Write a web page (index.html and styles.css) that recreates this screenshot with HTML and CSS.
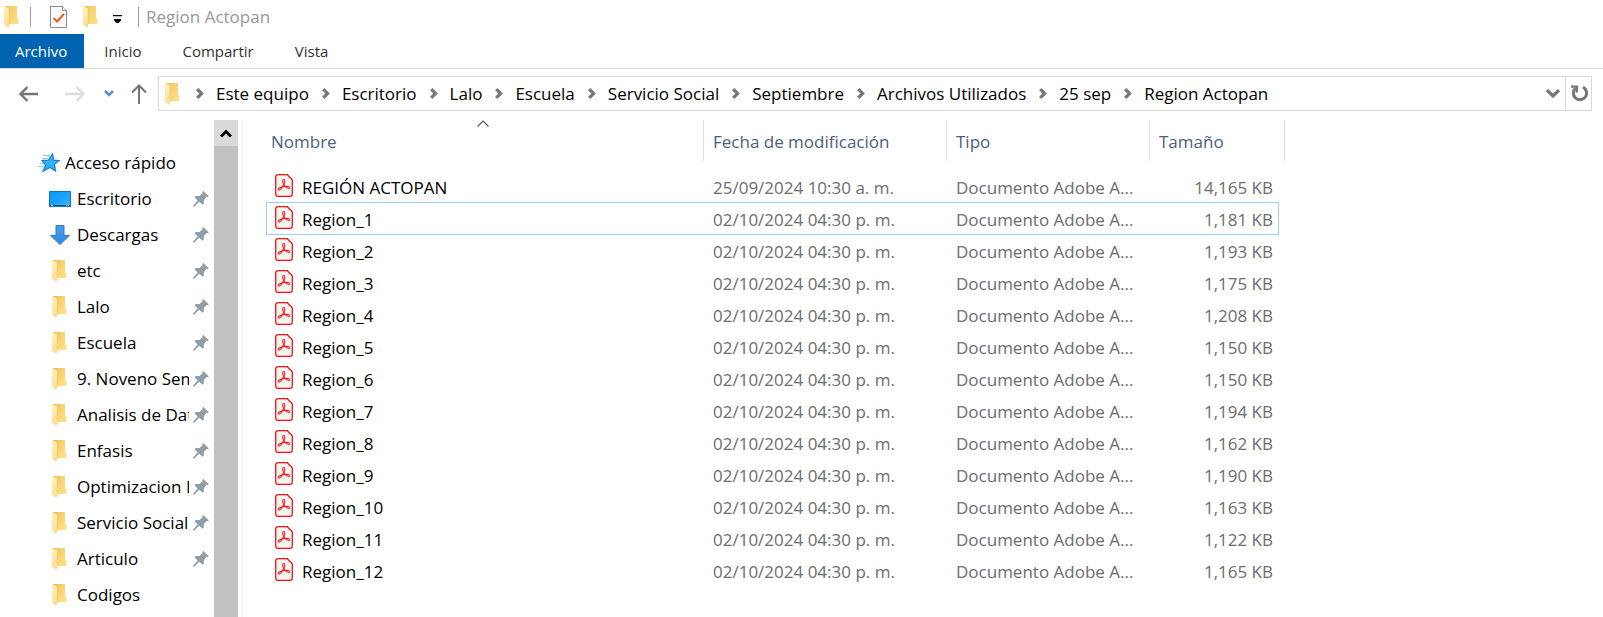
FILE: index.html
```
<!DOCTYPE html>
<html lang="es">
<head>
<meta charset="utf-8">
<title>Region Actopan</title>
<link rel="stylesheet" href="styles.css">
</head>
<body>
<svg class="sprite" aria-hidden="true">
  <defs>
    <linearGradient id="g-back" x1="0" y1="0" x2="1" y2="1"><stop offset="0" stop-color="#eec662"/><stop offset="1" stop-color="#ffe28a"/></linearGradient>
    <linearGradient id="g-flap" x1="0" y1="0" x2="0" y2="1"><stop offset="0" stop-color="#fff0bd"/><stop offset="1" stop-color="#fddf90"/></linearGradient>
    <linearGradient id="g-screen" x1="0" y1="0" x2="1" y2="1"><stop offset="0" stop-color="#0f9bfb"/><stop offset=".5" stop-color="#18a0fb"/><stop offset="1" stop-color="#46b4ff"/></linearGradient>
    <linearGradient id="g-down" x1="0" y1="0" x2="0" y2="1"><stop offset="0" stop-color="#4a9fea"/><stop offset="1" stop-color="#2a8ae0"/></linearGradient>
  </defs>
  <symbol id="folder" viewBox="0 0 15 22">
    <path d="M1 0H13V12L14.500 13V18H3Z" fill="url(#g-back)"/>
    <path d="M0 0L5 3V18.500L4 22L0 18.500Z" fill="url(#g-flap)"/>
    <path d="M5 3V18.500L4 21" fill="none" stroke="#ecc66a" stroke-width=".6"/>
  </symbol>
  <symbol id="sep" viewBox="0 0 8 11"><path d="M1.200 1.200L5.600 5.500L1.200 9.800" fill="none" stroke="#777" stroke-width="3.200"/></symbol>
  <symbol id="pin" viewBox="0 0 16 16">
    <path d="M10.300 0L15.800 5.200L14.600 6.200L13.400 6L10.800 9.200L10.800 12.800L9.600 13.800L6.300 10.800L1 15.800L0 15.700L.1 14.700L4.700 9.300L1.400 6.200L2.600 5L6.400 5L9.700 2.300L9.300 1Z" fill="#919ca5"/>
  </symbol>
  <symbol id="pdf" viewBox="0 0 18 23">
    <path d="M3 .7H12.300L17.300 5.700V20Q17.300 22.300 15 22.300H3Q.7 22.300 .7 20V3Q.7 .7 3 .7Z" fill="#f4f4f4" stroke="#f6120a" stroke-width="1.300"/>
    <g fill="none" stroke="#f02018" stroke-width="1.100">
      <path d="M8.700 10.200C7.200 8 7.200 5.500 8.700 5.500C10.200 5.500 10 7.900 8.900 10.200"/>
      <path d="M8.900 10.200C8.300 11.600 7.500 12.900 6.600 14C5.100 16.300 3.400 16.500 3.500 15.200C3.700 14 5.400 13.400 7 13"/>
      <path d="M8.700 10.200C9.400 11.400 10.300 12.300 11.400 13.200C13.200 15 14.900 14.700 14.700 13.500C14.400 12.200 12.500 12.200 10.800 12.300C9.400 12.400 8.100 12.700 7 13"/>
    </g>
  </symbol>
</svg>

<header class="titlebar">
  <svg class="folder"><use href="#folder"/></svg>
  <span class="rule"></span>
  <button class="plain quick-doc" aria-label="Propiedades"><svg width="18" height="22" viewBox="0 0 18 22"><path d="M.5 .5H12.500L16.500 4.500V21.500H.5Z" fill="#f8f9fb" stroke="#8a8a8a"/><path d="M12.500 .5V4.500H16.500" fill="#fff" stroke="#8a8a8a"/><path d="M3.500 12L7 15.500L14 8" fill="none" stroke="#f05a1c" stroke-width="2"/></svg></button>
  <button class="plain quick-folder" aria-label="Nueva carpeta"><svg class="folder"><use href="#folder"/></svg></button>
  <button class="plain quick-more" aria-label="Personalizar"><svg width="9" height="9" viewBox="0 0 9 9"><path d="M0 0H9V1.300H0ZM1 4H8V5.500L5.500 8H3.500L1 5.500Z" fill="#000"/></svg></button>
  <span class="rule"></span>
  <h1 class="title">Region Actopan</h1>
</header>

<nav class="tabs" aria-label="Cinta">
  <button class="tab file">Archivo</button>
  <button class="tab">Inicio</button>
  <button class="tab share">Compartir</button>
  <button class="tab">Vista</button>
</nav>

<div class="navbar">
  <div class="history">
    <button class="plain" aria-label="Atrás"><svg width="20" height="16" viewBox="0 0 20 16"><path d="M8.500 1L1.500 8L8.500 15M1.500 8H19" fill="none" stroke="#747474" stroke-width="2.400"/></svg></button>
    <button class="plain forward" aria-label="Adelante"><svg width="20" height="16" viewBox="0 0 20 16"><path d="M11.500 1L18.500 8L11.500 15M18.500 8H0" fill="none" stroke="#dcdcdc" stroke-width="2.400"/></svg></button>
    <button class="plain recent" aria-label="Ubicaciones recientes"><svg width="10" height="7" viewBox="0 0 10 7"><path d="M1 1L5 5L9 1" fill="none" stroke="#5f92c8" stroke-width="2.600"/></svg></button>
    <button class="plain up" aria-label="Subir"><svg width="16" height="20" viewBox="0 0 16 20"><path d="M1 8.500L8 1.500L15 8.500M8 1.500V20" fill="none" stroke="#747474" stroke-width="2"/></svg></button>
  </div>
  <div class="address">
    <svg class="folder"><use href="#folder"/></svg>
    <div class="crumbs">
      <svg class="sep"><use href="#sep"/></svg><a href="#">Este equipo</a>
      <svg class="sep"><use href="#sep"/></svg><a href="#">Escritorio</a>
      <svg class="sep"><use href="#sep"/></svg><a href="#">Lalo</a>
      <svg class="sep"><use href="#sep"/></svg><a href="#">Escuela</a>
      <svg class="sep"><use href="#sep"/></svg><a href="#">Servicio Social</a>
      <svg class="sep"><use href="#sep"/></svg><a href="#">Septiembre</a>
      <svg class="sep"><use href="#sep"/></svg><a href="#">Archivos Utilizados</a>
      <svg class="sep"><use href="#sep"/></svg><a href="#">25 sep</a>
      <svg class="sep"><use href="#sep"/></svg><a href="#">Region Actopan</a>
    </div>
    <button class="plain drop" aria-label="Ubicaciones anteriores"><svg width="14" height="9" viewBox="0 0 14 9"><path d="M1 1.200L7 7L13 1.200" fill="none" stroke="#777" stroke-width="3.200"/></svg></button>
    <button class="plain refresh" aria-label="Actualizar"><svg width="17" height="17" viewBox="0 0 17 17"><path d="M12 2.200A6.600 6.600 0 1 1 4.500 3.200" fill="none" stroke="#777" stroke-width="3"/><path d="M0 .5H7V7.500H4.700V2.800H0Z" fill="#777"/></svg></button>
  </div>
</div>

<main class="body">
  <aside class="side">
    <ul class="tree">
      <li class="root"><svg width="22" height="20" viewBox="0 0 22 20"><path d="M14.500 1L15.800 7.200L21.200 7.600L16.400 11.400L17.600 18L12 14.500L5 18.200L7.600 12L4 7.600L10.400 7.200Z" fill="#35b0f5" stroke="#1483cc" stroke-width="1.200"/><path d="M5 2.500H12M4 5.500H10M0 13.500H6M2 10.500H5" stroke="#8cc9f2" stroke-width="1.200"/></svg><a href="#">Acceso rápido</a></li>
      <li><svg class="pic" width="22" height="16" viewBox="0 0 22 16"><path d="M.5 .5H21.500V15.500H.5Z" fill="url(#g-screen)" stroke="#0b73b8"/><path d="M1 14.500H21" stroke="#08548c"/><path d="M2 14.500H4M17 14.500H18M19 14.500H20" stroke="#fff"/></svg><a href="#">Escritorio</a><svg class="pin"><use href="#pin"/></svg></li>
      <li><svg class="pic" width="22" height="20" viewBox="0 0 22 20"><path d="M7 .5H15V10.500H20.300L11 19.500L1.700 10.500H7Z" fill="url(#g-down)" stroke="#2b7fca"/></svg><a href="#">Descargas</a><svg class="pin"><use href="#pin"/></svg></li>
      <li><svg class="folder"><use href="#folder"/></svg><a href="#">etc</a><svg class="pin"><use href="#pin"/></svg></li>
      <li><svg class="folder"><use href="#folder"/></svg><a href="#">Lalo</a><svg class="pin"><use href="#pin"/></svg></li>
      <li><svg class="folder"><use href="#folder"/></svg><a href="#">Escuela</a><svg class="pin"><use href="#pin"/></svg></li>
      <li><svg class="folder"><use href="#folder"/></svg><a href="#">9. Noveno Semestre</a><svg class="pin"><use href="#pin"/></svg></li>
      <li><svg class="folder"><use href="#folder"/></svg><a href="#">Analisis de Datos</a><svg class="pin"><use href="#pin"/></svg></li>
      <li><svg class="folder"><use href="#folder"/></svg><a href="#">Enfasis</a><svg class="pin"><use href="#pin"/></svg></li>
      <li><svg class="folder"><use href="#folder"/></svg><a href="#">Optimizacion D</a><svg class="pin"><use href="#pin"/></svg></li>
      <li><svg class="folder"><use href="#folder"/></svg><a href="#">Servicio Social</a><svg class="pin"><use href="#pin"/></svg></li>
      <li><svg class="folder"><use href="#folder"/></svg><a href="#">Articulo</a><svg class="pin"><use href="#pin"/></svg></li>
      <li><svg class="folder"><use href="#folder"/></svg><a href="#">Codigos</a></li>
    </ul>
    <div class="scroll"><button class="plain scroll-up" aria-label="Desplazar hacia arriba"><svg width="12" height="10" viewBox="0 0 12 10"><path d="M1 8.500L6 3.500L11 8.500" fill="none" stroke="#000" stroke-width="3"/></svg></button></div>
  </aside>

  <section class="files">
    <table class="list">
      <colgroup><col class="c-name"><col class="c-date"><col class="c-type"><col class="c-size"></colgroup>
      <thead>
        <tr><th scope="col">Nombre<svg class="sort" width="12" height="7" viewBox="0 0 12 7"><path d="M.5 6.500L6 1L11.500 6.500" fill="none" stroke="#555" stroke-width="1.200"/></svg></th><th scope="col">Fecha de modificación</th><th scope="col">Tipo</th><th scope="col">Tamaño</th></tr>
      </thead>
      <tbody>
        <tr><td><svg class="pdf"><use href="#pdf"/></svg>REGIÓN ACTOPAN</td><td>25/09/2024 10:30 a. m.</td><td>Documento Adobe A...</td><td>14,165 KB</td></tr>
        <tr class="focused"><td><svg class="pdf"><use href="#pdf"/></svg>Region_1</td><td>02/10/2024 04:30 p. m.</td><td>Documento Adobe A...</td><td>1,181 KB</td></tr>
        <tr><td><svg class="pdf"><use href="#pdf"/></svg>Region_2</td><td>02/10/2024 04:30 p. m.</td><td>Documento Adobe A...</td><td>1,193 KB</td></tr>
        <tr><td><svg class="pdf"><use href="#pdf"/></svg>Region_3</td><td>02/10/2024 04:30 p. m.</td><td>Documento Adobe A...</td><td>1,175 KB</td></tr>
        <tr><td><svg class="pdf"><use href="#pdf"/></svg>Region_4</td><td>02/10/2024 04:30 p. m.</td><td>Documento Adobe A...</td><td>1,208 KB</td></tr>
        <tr><td><svg class="pdf"><use href="#pdf"/></svg>Region_5</td><td>02/10/2024 04:30 p. m.</td><td>Documento Adobe A...</td><td>1,150 KB</td></tr>
        <tr><td><svg class="pdf"><use href="#pdf"/></svg>Region_6</td><td>02/10/2024 04:30 p. m.</td><td>Documento Adobe A...</td><td>1,150 KB</td></tr>
        <tr><td><svg class="pdf"><use href="#pdf"/></svg>Region_7</td><td>02/10/2024 04:30 p. m.</td><td>Documento Adobe A...</td><td>1,194 KB</td></tr>
        <tr><td><svg class="pdf"><use href="#pdf"/></svg>Region_8</td><td>02/10/2024 04:30 p. m.</td><td>Documento Adobe A...</td><td>1,162 KB</td></tr>
        <tr><td><svg class="pdf"><use href="#pdf"/></svg>Region_9</td><td>02/10/2024 04:30 p. m.</td><td>Documento Adobe A...</td><td>1,190 KB</td></tr>
        <tr><td><svg class="pdf"><use href="#pdf"/></svg>Region_10</td><td>02/10/2024 04:30 p. m.</td><td>Documento Adobe A...</td><td>1,163 KB</td></tr>
        <tr><td><svg class="pdf"><use href="#pdf"/></svg>Region_11</td><td>02/10/2024 04:30 p. m.</td><td>Documento Adobe A...</td><td>1,122 KB</td></tr>
        <tr><td><svg class="pdf"><use href="#pdf"/></svg>Region_12</td><td>02/10/2024 04:30 p. m.</td><td>Documento Adobe A...</td><td>1,165 KB</td></tr>
      </tbody>
    </table>
  </section>
</main>
</body>
</html>
```
FILE: styles.css
```
* { box-sizing: border-box; }

body {
  margin: 0;
  min-height: 100vh;
  display: flex;
  flex-direction: column;
  background: #fff;
  color: #000;
  font: 17px/24px "Open Sans", "Noto Sans", sans-serif;
}

svg { display: block; flex: none; }
a { color: inherit; text-decoration: none; white-space: nowrap; }

.sprite { position: absolute; width: 0; height: 0; }
.folder { width: 15px; height: 22px; }
.plain { display: flex; align-items: center; justify-content: center; padding: 0; border: 0; background: none; }

/* Title bar */
.titlebar { display: flex; align-items: center; height: 34px; padding-left: 4px; }
.rule { width: 1px; height: 20px; background: #999; }
.titlebar > .folder { margin-right: 11px; }
.quick-doc { margin-left: 19px; }
.quick-folder { margin-left: 15px; }
.quick-more { margin: 5px 16px 0 15px; }
.title { margin: 0 0 0 7px; font-size: 17px; font-weight: 400; color: #999; }

/* Ribbon tabs */
.tabs { display: flex; height: 35px; border-bottom: 1px solid #d9d9d9; }
.tab { padding: 0 20px; border: 0; background: none; color: #333; font: inherit; font-size: 15px; }
.tab.file { padding: 0 17px 0 15px; background: #0063b1; color: #fff; }
.tab.share { padding: 0 21px; }

/* Navigation and address */
.navbar { display: flex; align-items: center; padding: 7px 11px 0 19px; }
.history { display: flex; align-items: center; width: 139px; flex: none; }
.forward { margin-left: 26px; }
.recent { margin-left: 19px; }
.up { margin-left: 17px; }
.address { display: flex; align-items: center; flex: 1; height: 35px; min-width: 0; padding-left: 6px; border: 1px solid #d9d9d9; }
.crumbs { display: flex; align-items: center; flex: 1; min-width: 0; overflow: hidden; padding-left: 16px; }
.sep { width: 8px; height: 11px; margin-right: 12px; }
.crumbs a { margin-right: 13px; }
.drop { width: 24px; height: 33px; }
.refresh { width: 26px; height: 33px; padding-left: 2px; border-left: 1px solid #d9d9d9; }

/* Main area */
.body { display: flex; flex: 1; padding-top: 9px; }

.side { display: flex; flex: none; width: 243px; border-right: 2px solid #f5f5f5; }
.tree { flex: 1; min-width: 0; margin: 0; padding: 25px 5px 0 49px; list-style: none; }
.tree li { display: flex; align-items: center; height: 36px; }
.tree li a { flex: 1; min-width: 0; overflow: hidden; }
.tree .folder { margin: 0 10px 0 3px; }
.tree .pic { width: 22px; margin-right: 6px; }
.tree .root { margin-left: -11px; }
.tree .root svg { margin-right: 5px; }
.pin { width: 16px; height: 16px; margin-left: 4px; }
.scroll { flex: none; width: 24px; margin-right: 3px; background: #c1c1c1; }
.scroll-up { width: 100%; height: 26px; background: #dadada; }

.files { flex: 1; min-width: 0; padding-left: 23px; }
.list { width: 1019px; table-layout: fixed; border-collapse: separate; border-spacing: 0; }
.c-name { width: 438px; }
.c-date { width: 243px; }
.c-type { width: 203px; }
.c-size { width: 135px; }
.list th { position: relative; height: 41px; padding: 2px 9px 0; border-right: 1px solid #e2e2e2; font-weight: 400; text-align: left; color: #4c607a; }
.list th:first-child { padding-left: 5px; }
.sort { position: absolute; top: 0; left: 50%; margin-left: -8px; }
.list td { height: 32px; padding: 3px 9px 0; color: #6d6d6d; vertical-align: baseline; white-space: nowrap; }
.list td:first-child { color: #000; }
.list td:last-child { padding-right: 12px; text-align: right; }
.pdf { display: inline-block; width: 18px; height: 23px; margin-right: 9px; vertical-align: -3px; }
.list tbody::before { content: ""; display: block; height: 10px; }
.focused { position: relative; }
.focused::after { content: ""; position: absolute; inset: -1px 6px 0 0; border: 1px solid #99d1ff; pointer-events: none; }
```
